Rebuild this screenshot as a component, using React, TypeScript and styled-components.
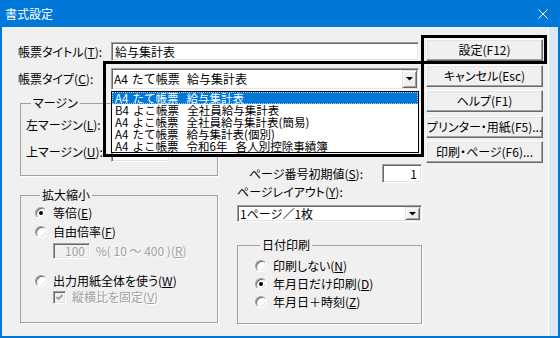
import styled, { createGlobalStyle } from 'styled-components';

const GlobalStyle = createGlobalStyle`
	html, body {
		margin: 0;
		padding: 0;
		background: #f0f0f0;
	}
	body {
		font-family: "Noto Sans CJK JP", "Noto Sans", sans-serif;
		font-size: 12px;
	}
`;

const Window = styled.div`
	position: relative;
	box-sizing: border-box;
	width: 560px;
	height: 338px;
	display: flex;
	flex-direction: column;
	background: #f0f0f0;
	border: 2px solid #0078d7;
	border-top: 0;
	color: #000;
	font-family: "Noto Sans CJK JP", "Noto Sans", sans-serif;
	font-size: 12px;
	line-height: 12px;
	font-feature-settings: "palt";
	overflow: hidden;
`;

const TitleBar = styled.div`
	flex: none;
	height: 27px;
	display: flex;
	align-items: center;
	justify-content: space-between;
	padding: 0 10px 0 3px;
	background: #0078d7;
	color: #fff;
`;

const Client = styled.div`
	flex: 1;
	display: flex;
	min-height: 0;
`;

const Main = styled.div`
	width: 404px;
	margin-left: 16px;
	padding-top: 15px;
	display: flex;
	flex-direction: column;
`;

const Row = styled.div<{ $h: number; $mt?: number; $end?: boolean }>`
	height: ${(p) => p.$h}px;
	margin-top: ${(p) => p.$mt ?? 0}px;
	display: flex;
	align-items: center;
	justify-content: ${(p) => (p.$end ? 'flex-end' : 'flex-start')};
	white-space: nowrap;
`;

const Label = styled.span<{ $w?: number }>`
	flex: none;
	width: ${(p) => (p.$w ? `${p.$w}px` : 'auto')};
	white-space: nowrap;
`;

const Field = styled.div<{ $w: number; $right?: boolean; $disabled?: boolean; $ml?: number }>`
	box-sizing: border-box;
	flex: none;
	width: ${(p) => p.$w}px;
	height: 100%;
	margin-left: ${(p) => p.$ml ?? 0}px;
	display: flex;
	align-items: center;
	justify-content: ${(p) => (p.$right ? 'flex-end' : 'flex-start')};
	padding: 0 4px 0 3px;
	background: ${(p) => (p.$disabled ? '#f0f0f0' : '#fff')};
	color: ${(p) => (p.$disabled ? '#a0a0a0' : '#000')};
	text-shadow: ${(p) => (p.$disabled ? '1px 1px 0 #fff' : 'none')};
	border: 1px solid;
	border-color: #a0a0a0 #fff #fff #a0a0a0;
	box-shadow: inset 1px 1px #696969, inset -1px -1px #e3e3e3;
	font-feature-settings: normal;
`;

const Combo = styled.div<{ $w: number; $h: number }>`
	position: relative;
	box-sizing: border-box;
	width: ${(p) => p.$w}px;
	height: ${(p) => p.$h}px;
	display: flex;
	align-items: center;
	background: #fff;
	border: 1px solid;
	border-color: #a0a0a0 #fff #fff #a0a0a0;
	box-shadow: inset 1px 1px #696969, inset -1px -1px #e3e3e3;
	font-feature-settings: normal;
`;

const ComboText = styled.span`
	flex: 1;
	padding-left: 2px;
	white-space: pre;
	word-spacing: 1px;
`;

const ArrowButton = styled.span`
	box-sizing: border-box;
	flex: none;
	width: 15px;
	align-self: stretch;
	margin: 1px 1px 1px 0;
	display: flex;
	align-items: center;
	justify-content: center;
	background: #f0f0f0;
	border: 1px solid;
	border-color: #e3e3e3 #696969 #696969 #e3e3e3;
	box-shadow: inset 1px 1px #fff, inset -1px -1px #a0a0a0;
`;

const DropList = styled.div`
	position: absolute;
	left: -1px;
	top: calc(100% + 2px);
	z-index: 5;
	box-sizing: border-box;
	width: 308px;
	border: 1px solid #000;
	background: #fff;
`;

const DropItem = styled.div<{ $selected?: boolean }>`
	height: 12px;
	font-size: 11.5px;
	line-height: 12px;
	padding-left: 3px;
	white-space: pre;
	word-spacing: 1.5px;
	background: ${(p) => (p.$selected ? '#0078d7' : 'transparent')};
	color: ${(p) => (p.$selected ? '#fff' : '#000')};
	outline: ${(p) => (p.$selected ? '1px dotted #9cc8ee' : 'none')};
	outline-offset: -1px;
`;

const Lower = styled.div`
	margin: 7px 0 0 2px;
	display: grid;
	grid-template-columns: 198px 185px;
	column-gap: 19px;
`;

const Column = styled.div`
	display: flex;
	flex-direction: column;
`;

const GroupBox = styled.fieldset<{ $mt?: number; $pt: number; $pb: number; $pl: number }>`
	margin: ${(p) => p.$mt ?? 0}px 0 0;
	padding: ${(p) => `${p.$pt}px 4px ${p.$pb}px ${p.$pl}px`};
	min-inline-size: 0;
	border: 1px solid #a0a0a0;
	box-shadow: 1px 1px 0 #fff;
	display: flex;
	flex-direction: column;
`;

const Legend = styled.legend`
	margin-left: 5px;
	padding: 0 2px;
	line-height: 12px;
`;

const Option = styled.div<{ $mt?: number; $ml?: number; $disabled?: boolean }>`
	height: 16px;
	margin-top: ${(p) => p.$mt ?? 0}px;
	margin-left: ${(p) => p.$ml ?? 0}px;
	display: flex;
	align-items: center;
	gap: 6px;
	white-space: nowrap;
	color: ${(p) => (p.$disabled ? '#a0a0a0' : '#000')};
	text-shadow: ${(p) => (p.$disabled ? '1px 1px 0 #fff' : 'none')};
`;

const OptionText = styled.span<{ $ml?: number }>`
	margin-left: ${(p) => p.$ml ?? 0}px;
	white-space: pre;
`;

const Radio = styled.span<{ $checked?: boolean }>`
	position: relative;
	flex: none;
	box-sizing: border-box;
	width: 12px;
	height: 12px;
	border-radius: 50%;
	background: #fff;
	border: 1px solid;
	border-color: #a0a0a0 #fff #fff #a0a0a0;
	box-shadow: inset 1px 1px #696969, inset -1px -1px #e3e3e3;

	&::after {
		content: '';
		display: ${(p) => (p.$checked ? 'block' : 'none')};
		position: absolute;
		left: 3px;
		top: 3px;
		width: 4px;
		height: 4px;
		border-radius: 50%;
		background: #000;
	}
`;

const CheckBox = styled.span<{ $disabled?: boolean }>`
	flex: none;
	box-sizing: border-box;
	width: 13px;
	height: 13px;
	display: flex;
	align-items: center;
	justify-content: center;
	background: ${(p) => (p.$disabled ? '#f0f0f0' : '#fff')};
	border: 1px solid;
	border-color: #a0a0a0 #fff #fff #a0a0a0;
	box-shadow: inset 1px 1px #696969, inset -1px -1px #e3e3e3;
`;

const ButtonColumn = styled.div`
	flex: none;
	width: 117px;
	margin-left: 4px;
	padding-top: 12px;
	display: flex;
	flex-direction: column;
	gap: 3.5px;
`;

const PushButton = styled.button`
	box-sizing: border-box;
	width: 100%;
	height: 22px;
	padding: 0;
	font-family: inherit;
	font-size: 12px;
	line-height: 12px;
	font-feature-settings: "palt";
	color: #000;
	white-space: nowrap;
	background: #f0f0f0;
	border: 1px solid;
	border-color: #fff #696969 #696969 #fff;
	box-shadow: inset -1px -1px #a0a0a0, inset 1px 1px #e3e3e3;
`;

const RightEdge = styled.div`
	flex: none;
	width: 9px;
	margin-left: auto;
	background: #d9e8f5;
	border-left: 1px solid #fff;
`;

const Highlight = styled.div<{ $x: number; $y: number; $w: number; $h: number }>`
	position: absolute;
	left: ${(p) => p.$x}px;
	top: ${(p) => p.$y}px;
	width: ${(p) => p.$w}px;
	height: ${(p) => p.$h}px;
	box-sizing: border-box;
	border: 3px solid #000;
	z-index: 10;
	pointer-events: none;
`;

const Arrow = () => (
	<svg width="7" height="4" viewBox="0 0 7 4">
		<polygon points="0,0 7,0 3.5,3.5" fill="#000" />
	</svg>
);

const Check = ({ color }: { color: string }) => (
	<svg width="9" height="9" viewBox="0 0 9 9">
		<path d="M1.5 4 L3.5 6 L7.5 2" fill="none" stroke={color} strokeWidth="1.8" />
	</svg>
);

const reportTypes = [
	'A4 たて帳票  給与集計表',
	'B4 よこ帳票  全社員給与集計表',
	'A4 よこ帳票  全社員給与集計表(簡易)',
	'A4 たて帳票  給与集計表(個別)',
	'A4 よこ帳票  令和6年  各人別控除事績簿',
];

const buttons = ['設定(F12)', 'キャンセル(Esc)', 'ヘルプ(F1)', 'プリンター・用紙(F5)...', '印刷・ページ(F6)...'];

const App = () => {
	return (
		<>
			<GlobalStyle />
			<Window>
				<TitleBar>
					<span>書式設定</span>
					<svg width="10" height="10" viewBox="0 0 10 10">
						<path d="M0.5 0.5 L9.5 9.5 M9.5 0.5 L0.5 9.5" stroke="#fff" strokeWidth="1" />
					</svg>
				</TitleBar>
				<Client>
					<Main>
						<Row $h={19}>
							<Label $w={93}>
								帳票タイトル(<u>T</u>):
							</Label>
							<Field $w={308}>給与集計表</Field>
						</Row>
						<Row $h={22} $mt={7}>
							<Label $w={93}>
								帳票タイプ(<u>C</u>):
							</Label>
							<Combo $w={308} $h={22}>
								<ComboText>{reportTypes[0]}</ComboText>
								<ArrowButton>
									<Arrow />
								</ArrowButton>
								<DropList>
									{reportTypes.map((t, i) => (
										<DropItem key={t} $selected={i === 0}>
											{t}
										</DropItem>
									))}
								</DropList>
							</Combo>
						</Row>
						<Lower>
							<Column>
								<GroupBox $pt={6} $pb={13} $pl={5}>
									<Legend>マージン</Legend>
									<Row $h={20}>
										<Label $w={85}>
											左マージン(<u>L</u>):
										</Label>
										<Field $w={59} $right />
									</Row>
									<Row $h={20} $mt={7}>
										<Label $w={85}>
											上マージン(<u>U</u>):
										</Label>
										<Field $w={59} $right />
									</Row>
								</GroupBox>
								<GroupBox $mt={13} $pt={4} $pb={17} $pl={14}>
									<Legend>拡大縮小</Legend>
									<Option>
										<Radio $checked />
										<OptionText>
											等倍(<u>E</u>)
										</OptionText>
									</Option>
									<Option $mt={3}>
										<Radio />
										<OptionText>
											自由倍率(<u>F</u>)
										</OptionText>
									</Option>
									<Option $mt={3} $ml={18} $disabled>
										<Field $w={37} $right $disabled>
											100
										</Field>
										<OptionText $ml={-3}>
											{' %( 10 ～ 400 )('}
											<u>R</u>)
										</OptionText>
									</Option>
									<Option $mt={14}>
										<Radio />
										<OptionText>
											出力用紙全体を使う(<u>W</u>)
										</OptionText>
									</Option>
									<Option $ml={18} $disabled>
										<CheckBox $disabled>
											<Check color="#a0a0a0" />
										</CheckBox>
										<OptionText>
											縦横比を固定(<u>V</u>)
										</OptionText>
									</Option>
								</GroupBox>
							</Column>
							<Column>
								<Option $mt={43}>
									<CheckBox>
										<Check color="#000" />
									</CheckBox>
								</Option>
								<Row $h={19} $mt={8} $end>
									<Label>
										ページ番号初期値(<u>S</u>):
									</Label>
									<Field $w={40} $right $ml={19}>
										1
									</Field>
								</Row>
								<Row $h={14} $mt={2}>
									<Label>
										ページレイアウト(<u>Y</u>):
									</Label>
								</Row>
								<Row $h={17} $mt={6}>
									<Combo $w={185} $h={17}>
										<ComboText>1ページ／1枚</ComboText>
										<ArrowButton>
											<Arrow />
										</ArrowButton>
									</Combo>
								</Row>
								<GroupBox $mt={17} $pt={7} $pb={13} $pl={17}>
									<Legend>日付印刷</Legend>
									<Option>
										<Radio />
										<OptionText>
											印刷しない(<u>N</u>)
										</OptionText>
									</Option>
									<Option $mt={2}>
										<Radio $checked />
										<OptionText>
											年月日だけ印刷(<u>D</u>)
										</OptionText>
									</Option>
									<Option $mt={2}>
										<Radio />
										<OptionText>
											年月日＋時刻(<u>Z</u>)
										</OptionText>
									</Option>
								</GroupBox>
							</Column>
						</Lower>
					</Main>
					<ButtonColumn>
						{buttons.map((b) => (
							<PushButton key={b}>{b}</PushButton>
						))}
					</ButtonColumn>
					<RightEdge />
				</Client>
				<Highlight $x={101} $y={61} $w={321} $h={96} />
				<Highlight $x={419} $y={35} $w={126} $h={29} />
			</Window>
		</>
	);
};

export default App;
